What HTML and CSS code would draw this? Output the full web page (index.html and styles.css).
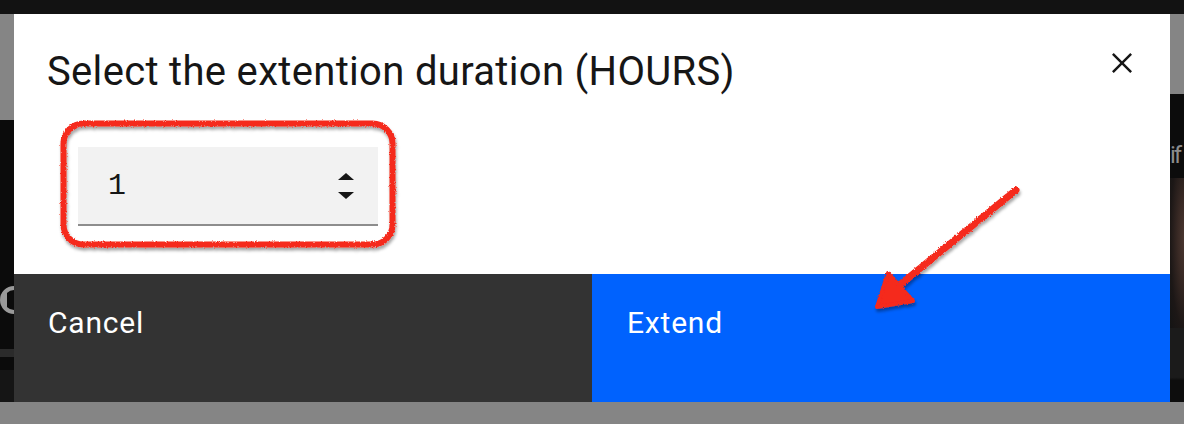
FILE: index.html
```html
<!DOCTYPE html>
<html lang="en">
<head>
<meta charset="utf-8">
<title>Extend</title>
<link rel="stylesheet" href="styles.css">
</head>
<body>
<div class="page">
  <div class="topbar"></div>
  <div class="middle">
    <div class="strip strip-left">
      <div class="seg seg-gray-l"></div>
      <div class="seg seg-dark-l">
        <svg class="side-icon" width="14" height="30" viewBox="0 0 14 30"><circle cx="14" cy="15" r="12" fill="none" stroke="#9a9a9a" stroke-width="4"/><path d="M3 8 L7 8 L7 22 L3 22 Z" fill="#9a9a9a"/></svg>
      </div>
      <div class="seg seg-line"></div>
      <div class="seg seg-dark2"></div>
      <div class="seg seg-dark3"></div>
    </div>
    <div class="center"></div>
    <div class="strip strip-right">
      <div class="seg seg-gray-r"></div>
      <div class="seg seg-dark-r">
        <span class="side-text">if</span>
        <div class="face"></div>
      </div>
    </div>
  </div>
  <div class="bottombar"></div>

  <div class="modal">
    <div class="modal-header">
      <h2 class="modal-title">Select the extention duration (HOURS)</h2>
      <button class="close-btn" aria-label="Close">
        <svg width="40" height="40" viewBox="0 0 32 32"><path d="M24 9.4L22.6 8 16 14.6 9.4 8 8 9.4 14.6 16 8 22.6 9.4 24 16 17.4 22.6 24 24 22.6 17.4 16 24 9.4z" fill="#161616"/></svg>
      </button>
    </div>
    <div class="modal-body">
      <div class="number-input">
        <span class="number-value">1</span>
        <div class="spinner">
          <svg width="16" height="7" viewBox="0 0 16 7"><path d="M8 0 L16 7 L0 7 Z" fill="#161616"/></svg>
          <svg width="16" height="7" viewBox="0 0 16 7"><path d="M0 0 L16 0 L8 7 Z" fill="#161616"/></svg>
        </div>
      </div>
    </div>
    <div class="modal-footer">
      <button class="btn btn-secondary">Cancel</button>
      <button class="btn btn-primary">Extend</button>
    </div>
  </div>

  <svg class="annotations" width="1184" height="424" viewBox="0 0 1184 424">
    <defs>
      <filter id="rough" x="-10%" y="-10%" width="120%" height="120%">
        <feTurbulence type="fractalNoise" baseFrequency="0.9" numOctaves="2" seed="3" result="noise"/>
        <feDisplacementMap in="SourceGraphic" in2="noise" scale="3" xChannelSelector="R" yChannelSelector="G" result="disp"/>
        <feGaussianBlur in="disp" stdDeviation="1.6" result="blur"/>
        <feOffset in="blur" dx="1" dy="3" result="off"/>
        <feColorMatrix in="off" type="matrix" values="0 0 0 0 0  0 0 0 0 0  0 0 0 0 0  0 0 0 0.35 0" result="shadow"/>
        <feMerge><feMergeNode in="shadow"/><feMergeNode in="disp"/></feMerge>
      </filter>
    </defs>
    <g filter="url(#rough)">
      <rect x="63.5" y="123.5" width="329" height="121" rx="20" ry="20" fill="none" stroke="#f5291c" stroke-width="6"/>
      <line x1="1016" y1="190" x2="896" y2="288" stroke="#f5291c" stroke-width="7" stroke-linecap="round"/>
      <path d="M888 273 L913 301 L877 307 Z" fill="#f5291c" stroke="#f5291c" stroke-width="4" stroke-linejoin="round"/>
    </g>
  </svg>
</div>
</body>
</html>
```
FILE: styles.css
```css
* { box-sizing: border-box; }
html, body { margin: 0; padding: 0; }
body {
  width: 1184px;
  height: 424px;
  overflow: hidden;
  font-family: Roboto, "Noto Sans", sans-serif;
  background: #0b0b0b;
}
.page {
  position: relative;
  width: 1184px;
  height: 424px;
  display: flex;
  flex-direction: column;
}
.topbar { height: 14px; background: #121212; flex: none; }
.middle { flex: 1; display: flex; }
.bottombar { height: 22px; background: #858585; flex: none; }
.strip { width: 14px; display: flex; flex-direction: column; overflow: hidden; }
.center { flex: 1; background: #0b0b0b; }
.seg { flex: none; }
.seg-gray-l { height: 106px; background: #858585; }
.seg-dark-l { height: 229px; background: #0b0b0b; padding-top: 165px; }
.side-icon { display: block; }
.seg-line { height: 8px; background: #2b2b2b; }
.seg-dark2 { height: 13px; background: #0b0b0b; }
.seg-dark3 { flex: 1; background: #151515; }
.seg-gray-r { height: 80px; background: #858585; }
.seg-dark-r {
  flex: 1;
  background: linear-gradient(#0c0c0c 0, #0c0c0c 60%, #1b1b1b 62%, #1b1b1b 92%, #0d0d0d 93%);
  display: flex;
  flex-direction: column;
}
.side-text {
  margin-top: 44px;
  margin-left: 0;
  font-size: 24px;
  line-height: 34px;
  letter-spacing: -2px;
  color: #8c8c8c;
  white-space: nowrap;
}
.face {
  margin-top: 6px;
  height: 150px;
  background: radial-gradient(ellipse at 100% 40%, #4a3630 0, #3a2a25 30%, #1c1716 70%, #141414 100%);
}

.modal {
  position: absolute;
  left: 14px;
  top: 14px;
  width: 1156px;
  height: 388px;
  background: #ffffff;
  display: flex;
  flex-direction: column;
}
.modal-header {
  display: flex;
  justify-content: space-between;
  align-items: flex-start;
  padding: 34px 0 0 33px;
}
.modal-title {
  margin: 0;
  font-weight: 400;
  font-size: 40px;
  line-height: 48px;
  color: #161616;
  letter-spacing: 0.32px;
}
.close-btn {
  margin: -5px 28px 0 0;
  padding: 0;
  border: 0;
  background: transparent;
  width: 40px;
  height: 40px;
}
.close-btn svg { display: block; }
.modal-body {
  padding: 51px 0 0 64px;
}
.number-input {
  width: 300px;
  height: 79px;
  background: #f2f2f2;
  border-bottom: 2px solid #8d8d8d;
  display: flex;
  align-items: center;
  justify-content: space-between;
  padding: 0 24px 0 30px;
}
.number-value {
  font-family: "Liberation Mono", monospace;
  font-size: 30px;
  color: #161616;
  line-height: 1;
}
.spinner {
  display: flex;
  flex-direction: column;
  gap: 12px;
}
.spinner svg { display: block; }
.modal-footer {
  margin-top: auto;
  height: 128px;
  display: grid;
  grid-template-columns: 1fr 1fr;
}
.btn {
  border: 0;
  margin: 0;
  text-align: left;
  font-family: Roboto, "Noto Sans", sans-serif;
  font-size: 30px;
  line-height: 35px;
  letter-spacing: 0.8px;
  color: #ffffff;
  display: flex;
  align-items: flex-start;
  padding: 31px 0 0 34px;
}
.btn-secondary { background: #333333; }
.btn-primary { background: #0062fe; padding-left: 35px; }
.annotations {
  position: absolute;
  left: 0;
  top: 0;
  pointer-events: none;
}
```
